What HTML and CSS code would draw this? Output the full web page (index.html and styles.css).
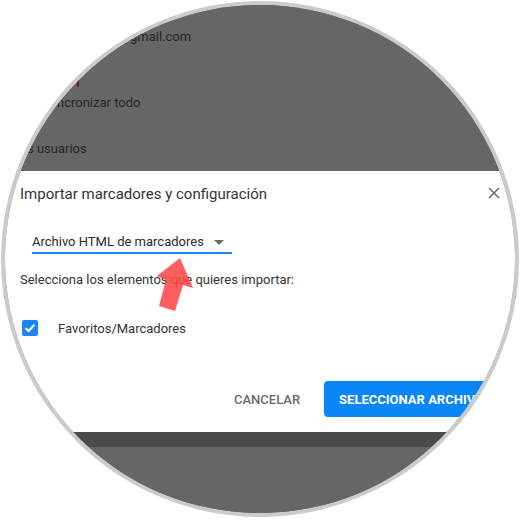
FILE: index.html
```html
<!DOCTYPE html>
<html lang="es">
<head>
<meta charset="utf-8">
<title>Importar marcadores y configuración</title>
<link rel="stylesheet" href="styles.css">
</head>
<body>
<div class="lens">
  <div class="screen">
    <div class="backdrop">
      <div class="line line-a"><span class="pre pre-a">usuario@</span><span>gmail.com</span></div>
      <div class="mark"></div>
      <div class="line line-b"><span class="pre pre-b">Si</span><span>ncronizar todo</span></div>
      <div class="line line-c"><span class="pre pre-c">Otro</span><span>s usuarios</span></div>
    </div>

    <div class="dialog">
      <div class="dialog-head">
        <h1 class="title">Importar marcadores y configuración</h1>
        <svg class="close" width="12" height="12" viewBox="0 0 12 12" aria-label="Cerrar">
          <path d="M1 1 L11 11 M11 1 L1 11" stroke="#6a6a6a" stroke-width="1.5" fill="none"/>
        </svg>
      </div>

      <div class="select">
        <span>Archivo HTML de marcadores</span>
        <span class="caret"></span>
      </div>

      <p class="desc">Selecciona los elementos que quieres importar:</p>

      <div class="check-row">
        <span class="checkbox">
          <svg width="16" height="16" viewBox="0 0 16 16"><path d="M3.6 8.2 L6.6 11 L12.4 4.8" stroke="#fff" stroke-width="2" fill="none"/></svg>
        </span>
        <span>Favoritos/Marcadores</span>
      </div>

      <div class="actions">
        <button class="btn btn-text">CANCELAR</button>
        <button class="btn btn-primary">SELECCIONAR ARCHIVO</button>
      </div>
    </div>

    <div class="band"></div>
    <div class="below"></div>

    <svg class="pointer" width="60" height="70" viewBox="0 0 60 70">
      <polygon points="30,7 7,25 16,29 9,55 25,60 33,34 43,37" fill="rgba(255,72,72,0.88)"/>
    </svg>
  </div>
</div>
</body>
</html>
```

FILE: styles.css
```css
* { box-sizing: border-box; }

html, body {
  margin: 0;
  padding: 0;
  background: #ffffff;
}

body {
  padding: 1px 0 0 1px;
  font-family: Roboto, "Liberation Sans", Arial, sans-serif;
}

.lens {
  width: 518px;
  height: 516px;
  border: 4px solid #cbcbcb;
  border-radius: 50%;
  overflow: hidden;
  background: #666666;
}

.screen {
  position: relative;
  width: 520px;
  margin: -5px 0 0 -5px;
}

/* dimmed page behind the dialog */
.backdrop {
  height: 171px;
  background: #666666;
  padding-top: 27px;
  color: #25262b;
  font-size: 13px;
}

.line {
  display: flex;
  height: 20px;
  line-height: 20px;
  white-space: nowrap;
}

.pre {
  display: block;
  text-align: right;
  flex: none;
}
.pre-a { width: 130px; }
.pre-b { width: 57px; }
.pre-c { width: 27px; }

.mark {
  width: 2px;
  height: 8px;
  margin: 32px 0 0 77px;
  background: #6a1b1b;
}

.line-b { margin-top: 6px; }
.line-c { margin-top: 26px; }

/* dialog */
.dialog {
  height: 261px;
  background: #ffffff;
  padding: 13px 20px 0 20px;
  color: #333333;
  font-size: 13px;
}

.dialog-head {
  display: flex;
  align-items: center;
  justify-content: space-between;
  height: 20px;
}

.title {
  margin: 0;
  font-size: 15px;
  font-weight: 400;
  line-height: 20px;
  color: #333333;
}

.close {
  display: block;
  margin-top: -2px;
}

.select {
  display: flex;
  align-items: center;
  justify-content: space-between;
  width: 200px;
  height: 22px;
  margin: 28px 0 0 12px;
  padding-right: 8px;
  line-height: 20px;
  border-bottom: 2px solid #1a86f2;
  color: #2b2b2b;
}

.caret {
  width: 0;
  height: 0;
  border-left: 5px solid transparent;
  border-right: 5px solid transparent;
  border-top: 5px solid #6e6e6e;
  margin-top: 1px;
}

.desc {
  margin: 16px 0 0;
  line-height: 20px;
}

.check-row {
  display: flex;
  align-items: center;
  gap: 20px;
  height: 20px;
  margin-top: 28px;
  padding-left: 2px;
}

.checkbox {
  display: block;
  width: 16px;
  height: 16px;
  border-radius: 2px;
  background: #1a86f2;
}
.checkbox svg { display: block; }

.actions {
  display: flex;
  gap: 8px;
  margin: 43px 0 0 198px;
}

.btn {
  height: 36px;
  padding: 0 16px;
  border: none;
  border-radius: 4px;
  font-family: inherit;
  font-size: 13px;
  font-weight: 500;
  white-space: nowrap;
  flex: none;
}

.btn-text {
  background: transparent;
  color: #6b6b6b;
}

.btn-primary {
  background: #0a86f6;
  color: #ffffff;
  font-weight: 700;
  padding: 0 15px;
}

.band {
  height: 15px;
  background: #4b4b4b;
}

.below {
  height: 80px;
  background: #666666;
}

.pointer {
  position: absolute;
  left: 150px;
  top: 251px;
}
```
